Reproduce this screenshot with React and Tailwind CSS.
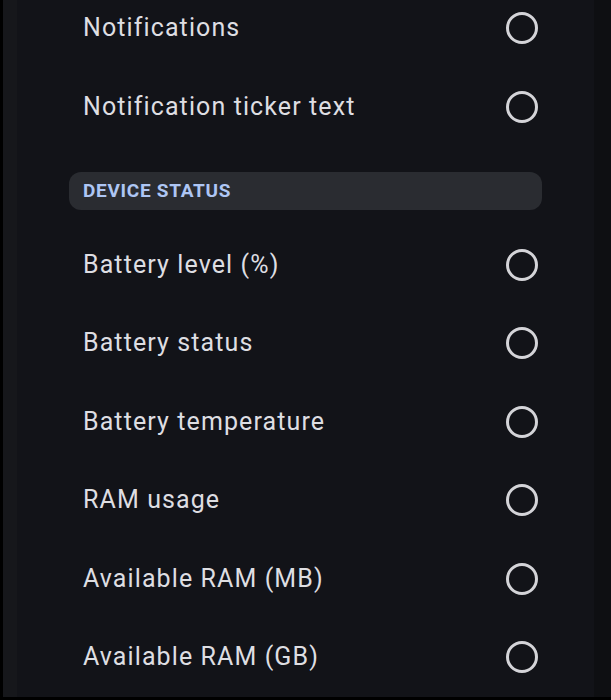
const font = { fontFamily: 'Roboto, "Noto Sans", sans-serif' };

function Row({ label }) {
  return (
    <div className="flex h-[78.5px] items-center justify-between pl-[66px] pr-[56px]">
      <span className="text-[25px] tracking-[1.1px] text-[#dedee2]">{label}</span>
      <span className="h-[32px] w-[32px] rounded-full border-[3px] border-[#d4d4d8]" />
    </div>
  );
}

export default function App() {
  const top = ['Notifications', 'Notification ticker text'];
  const status = [
    'Battery level (%)',
    'Battery status',
    'Battery temperature',
    'RAM usage',
    'Available RAM (MB)',
    'Available RAM (GB)',
  ];

  return (
    <div className="flex h-[700px] w-[611px] overflow-hidden bg-black pb-[3px] pl-[3px]" style={font}>
      <div className="w-[14px] bg-[#16171b]" />
      <div className="flex-1 overflow-hidden bg-[#121318]">
        <div className="-mt-[11.25px]">
          {top.map((t) => (
            <Row key={t} label={t} />
          ))}
          <div className="mx-[52px] mt-[26px] mb-[15.5px] flex h-[38px] items-center rounded-[12px] bg-[#2a2c31] pl-[14px]">
            <span className="text-[19px] font-bold tracking-[0.7px] text-[#aec6f4]">DEVICE STATUS</span>
          </div>
          {status.map((t) => (
            <Row key={t} label={t} />
          ))}
        </div>
      </div>
      <div className="w-[17px] bg-[#0e0f12]" />
    </div>
  );
}
